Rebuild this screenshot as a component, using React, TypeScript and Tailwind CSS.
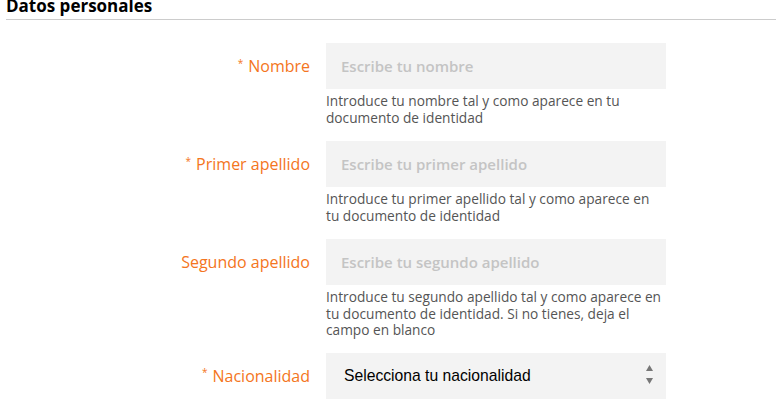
const font = { fontFamily: '"Open Sans", "Noto Sans", sans-serif' };

interface FieldProps {
  label: string;
  required?: boolean;
  placeholder: string;
  help: string[];
}

const Label = ({ label, required }: { label: string; required?: boolean }) => (
  <label className="w-[310px] shrink-0 h-[46px] flex items-center justify-end text-[16px] text-[#f47521]">
    {required && <span className="text-[10px] mr-[5px] -mt-[6px]">*</span>}
    {label}
  </label>
);

const Field = ({ label, required, placeholder, help }: FieldProps) => (
  <div className="flex">
    <Label label={label} required={required} />
    <div className="ml-4 w-[340px]">
      <input
        className="w-full h-[46px] bg-[#f3f3f3] px-[15px] text-[15px] font-semibold outline-none placeholder:text-[#c4c4c4]"
        placeholder={placeholder}
        style={font}
      />
      <p className="mt-[4px] text-[13.7px] leading-[16.5px] text-[#555] whitespace-nowrap">
        {help.map((line) => (
          <span key={line} className="block">
            {line}
          </span>
        ))}
      </p>
    </div>
  </div>
);

export default function App() {
  return (
    <div className="w-[780px] h-[400px] overflow-hidden bg-white" style={font}>
      <div className="px-[6px]">
        <h2 className="-mt-[7px] text-[17px] font-bold text-black leading-[26px]">Datos personales</h2>
        <div className="h-px bg-[#cccccc] mr-[-2px]" />
      </div>
      <div className="mt-[23px] flex flex-col gap-[15px]">
        <Field
          required
          label="Nombre"
          placeholder="Escribe tu nombre"
          help={['Introduce tu nombre tal y como aparece en tu', 'documento de identidad']}
        />
        <Field
          required
          label="Primer apellido"
          placeholder="Escribe tu primer apellido"
          help={['Introduce tu primer apellido tal y como aparece en', 'tu documento de identidad']}
        />
        <Field
          label="Segundo apellido"
          placeholder="Escribe tu segundo apellido"
          help={[
            'Introduce tu segundo apellido tal y como aparece en',
            'tu documento de identidad. Si no tienes, deja el',
            'campo en blanco',
          ]}
        />
        <div className="flex -mt-[1px]">
          <Label label="Nacionalidad" required />
          <div className="ml-4 w-[340px] h-[46px] bg-[#f3f3f3] flex items-center justify-between pl-[18px] pr-[13px]">
            <span className="text-[15.7px] text-black" style={{ fontFamily: '"Liberation Sans", Arial, sans-serif' }}>
              Selecciona tu nacionalidad
            </span>
            <span className="flex flex-col items-center gap-[7px] text-[#777] -mt-[2px]">
              <svg width="7" height="6" viewBox="0 0 7 6"><path d="M3.5 0L7 6H0z" fill="currentColor" /></svg>
              <svg width="7" height="6" viewBox="0 0 7 6"><path d="M0 0h7L3.5 6z" fill="currentColor" /></svg>
            </span>
          </div>
        </div>
      </div>
    </div>
  );
}
